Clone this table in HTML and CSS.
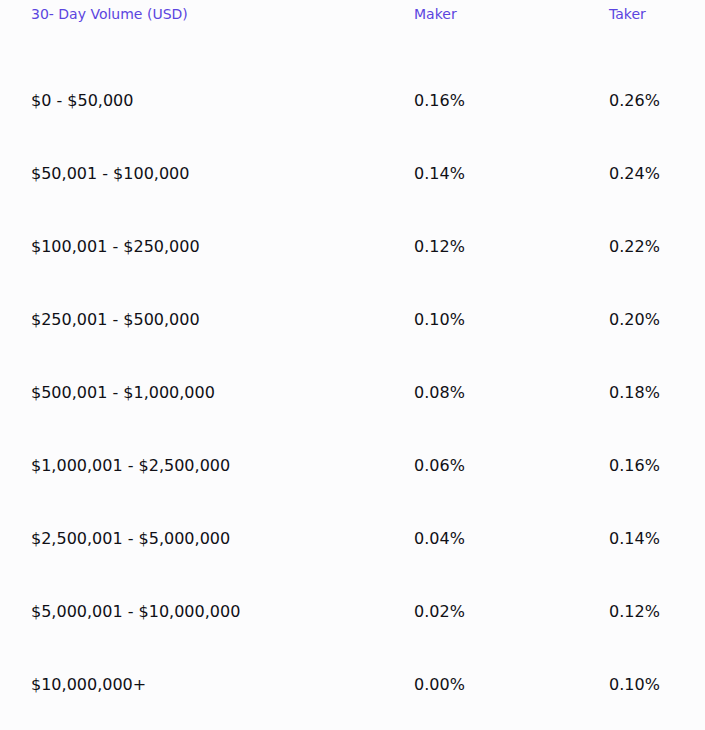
FILE: index.html
```html
<!DOCTYPE html>
<html>
<head>
<meta charset="utf-8">
<link rel="stylesheet" href="styles.css">
</head>
<body>
<div class="fees">
  <div class="row head">
    <div class="c1">30- Day Volume (USD)</div>
    <div class="c2">Maker</div>
    <div class="c3">Taker</div>
  </div>
  <div class="row"><div class="c1">$0 - $50,000</div><div class="c2">0.16%</div><div class="c3">0.26%</div></div>
  <div class="row"><div class="c1">$50,001 - $100,000</div><div class="c2">0.14%</div><div class="c3">0.24%</div></div>
  <div class="row"><div class="c1">$100,001 - $250,000</div><div class="c2">0.12%</div><div class="c3">0.22%</div></div>
  <div class="row"><div class="c1">$250,001 - $500,000</div><div class="c2">0.10%</div><div class="c3">0.20%</div></div>
  <div class="row"><div class="c1">$500,001 - $1,000,000</div><div class="c2">0.08%</div><div class="c3">0.18%</div></div>
  <div class="row"><div class="c1">$1,000,001 - $2,500,000</div><div class="c2">0.06%</div><div class="c3">0.16%</div></div>
  <div class="row"><div class="c1">$2,500,001 - $5,000,000</div><div class="c2">0.04%</div><div class="c3">0.14%</div></div>
  <div class="row"><div class="c1">$5,000,001 - $10,000,000</div><div class="c2">0.02%</div><div class="c3">0.12%</div></div>
  <div class="row"><div class="c1">$10,000,000+</div><div class="c2">0.00%</div><div class="c3">0.10%</div></div>
</div>
</body>
</html>
```
FILE: styles.css
```css
html, body {
  margin: 0;
  padding: 0;
  background: #fcfcfd;
}
body {
  font-family: "DejaVu Sans", sans-serif;
  font-weight: 400;
  color: #101016;
}
.fees {
  padding-left: 31px;
}
.row {
  display: grid;
  grid-template-columns: 383px 195px 1fr;
  align-items: center;
  height: 73px;
  font-size: 16px;
}
.row.head {
  height: 64px;
  align-items: start;
  font-size: 14px;
  line-height: 28px;
  color: #5b45e0;
}
```
